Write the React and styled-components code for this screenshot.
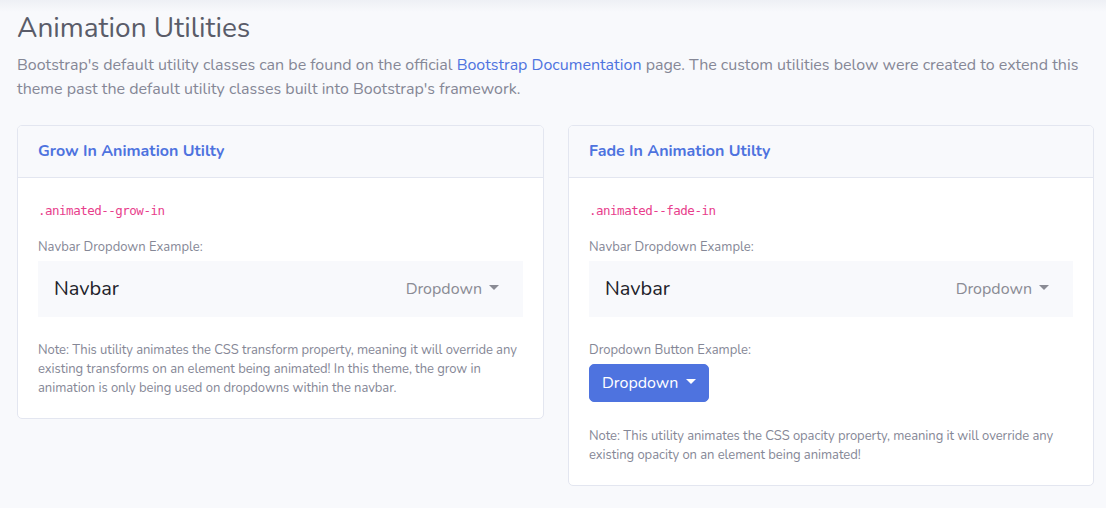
import React from "react";
import styled, { createGlobalStyle } from "styled-components";

const Global = createGlobalStyle`
  html, body { margin: 0; padding: 0; }
  body {
    background: #f8f9fc;
    font-family: "Nunito", "Lato", "Noto Sans", sans-serif;
    color: #858796;
    font-size: 16px;
    line-height: 1.5;
  }
  * { box-sizing: border-box; }
`;

const Page = styled.div`
  min-height: 508px;
  padding: 12px 12px 20px 17px;
  background: linear-gradient(#eef0f5 0px, #f8f9fc 12px);
`;

const Title = styled.h1`
  margin: 0 0 7px;
  font-size: 28px;
  font-weight: 400;
  line-height: 1.2;
  color: #5a5c69;
`;

const Lead = styled.p`
  margin: 0 0 24px;
  font-size: 16px;
  line-height: 24px;
  color: #858796;
  max-width: 1070px;
`;

const Link = styled.a`
  color: #4e73df;
  text-decoration: none;
`;

const Grid = styled.div`
  display: grid;
  grid-template-columns: 527px 526px;
  column-gap: 24px;
  align-items: start;
`;

const Card = styled.div`
  background: #fff;
  border: 1px solid #e3e6f0;
  border-radius: 5px;
  overflow: hidden;
`;

const CardHeader = styled.div`
  background: #f8f9fc;
  border-bottom: 1px solid #e3e6f0;
  padding: 13px 20px 14px;
  font-size: 16px;
  font-weight: 700;
  line-height: 24px;
  color: #4e73df;
`;

const CardBody = styled.div`
  padding: 20px 20px 20px;
`;

const Code = styled.code`
  display: block;
  font-family: "DejaVu Sans Mono", "Liberation Mono", monospace;
  font-size: 12.5px;
  letter-spacing: -0.5px;
  line-height: 21px;
  color: #e83e8c;
  margin: 2px 0 17px;
`;

const Label = styled.div`
  font-size: 13px;
  line-height: 19px;
  color: #858796;
  margin-bottom: 4px;
`;

const Navbar = styled.div`
  display: flex;
  align-items: center;
  justify-content: space-between;
  height: 56px;
  padding: 0 24px 0 16px;
  background: #f8f9fc;
  margin-bottom: 24px;
`;

const Brand = styled.span`
  font-size: 20px;
  color: #212229;
`;

const NavLink = styled.span`
  display: inline-flex;
  align-items: center;
  gap: 7px;
  font-size: 16px;
  color: #8a8b94;
`;

const Caret = styled.span`
  display: inline-block;
  width: 0;
  height: 0;
  border-top: 5px solid currentColor;
  border-left: 5px solid transparent;
  border-right: 5px solid transparent;
  margin-top: -2px;
`;

const ButtonRow = styled.div`
  display: flex;
  margin: 0 0 25px;
`;

const Button = styled.button`
  display: inline-flex;
  align-items: center;
  gap: 8px;
  height: 38px;
  padding: 0 12px;
  background: #4e73df;
  border: 1px solid #4e73df;
  border-radius: 5px;
  color: #fff;
  font-family: inherit;
  font-size: 16px;
`;

const Note = styled.p`
  margin: 0;
  font-size: 13px;
  line-height: 19px;
  letter-spacing: -0.05px;
  color: #858796;
`;

function NavExample() {
  return (
    <Navbar>
      <Brand>Navbar</Brand>
      <NavLink>
        Dropdown <Caret />
      </NavLink>
    </Navbar>
  );
}

export default function App() {
  return (
    <>
      <Global />
      <Page>
        <Title>Animation Utilities</Title>
        <Lead>
          Bootstrap's default utility classes can be found on the official{" "}
          <Link href="#">Bootstrap Documentation</Link> page. The custom utilities
          below were created to extend this theme past the default utility classes
          built into Bootstrap's framework.
        </Lead>
        <Grid>
          <Card>
            <CardHeader>Grow In Animation Utilty</CardHeader>
            <CardBody>
              <Code>.animated--grow-in</Code>
              <Label>Navbar Dropdown Example:</Label>
              <NavExample />
              <Note>
                Note: This utility animates the CSS transform property, meaning it
                will override any existing transforms on an element being animated!
                In this theme, the grow in animation is only being used on dropdowns
                within the navbar.
              </Note>
            </CardBody>
          </Card>
          <Card>
            <CardHeader>Fade In Animation Utilty</CardHeader>
            <CardBody>
              <Code>.animated--fade-in</Code>
              <Label>Navbar Dropdown Example:</Label>
              <NavExample />
              <Label>Dropdown Button Example:</Label>
              <ButtonRow>
                <Button>
                  Dropdown <Caret />
                </Button>
              </ButtonRow>
              <Note>
                Note: This utility animates the CSS opacity property, meaning it will
                override any existing opacity on an element being animated!
              </Note>
            </CardBody>
          </Card>
        </Grid>
      </Page>
    </>
  );
}
